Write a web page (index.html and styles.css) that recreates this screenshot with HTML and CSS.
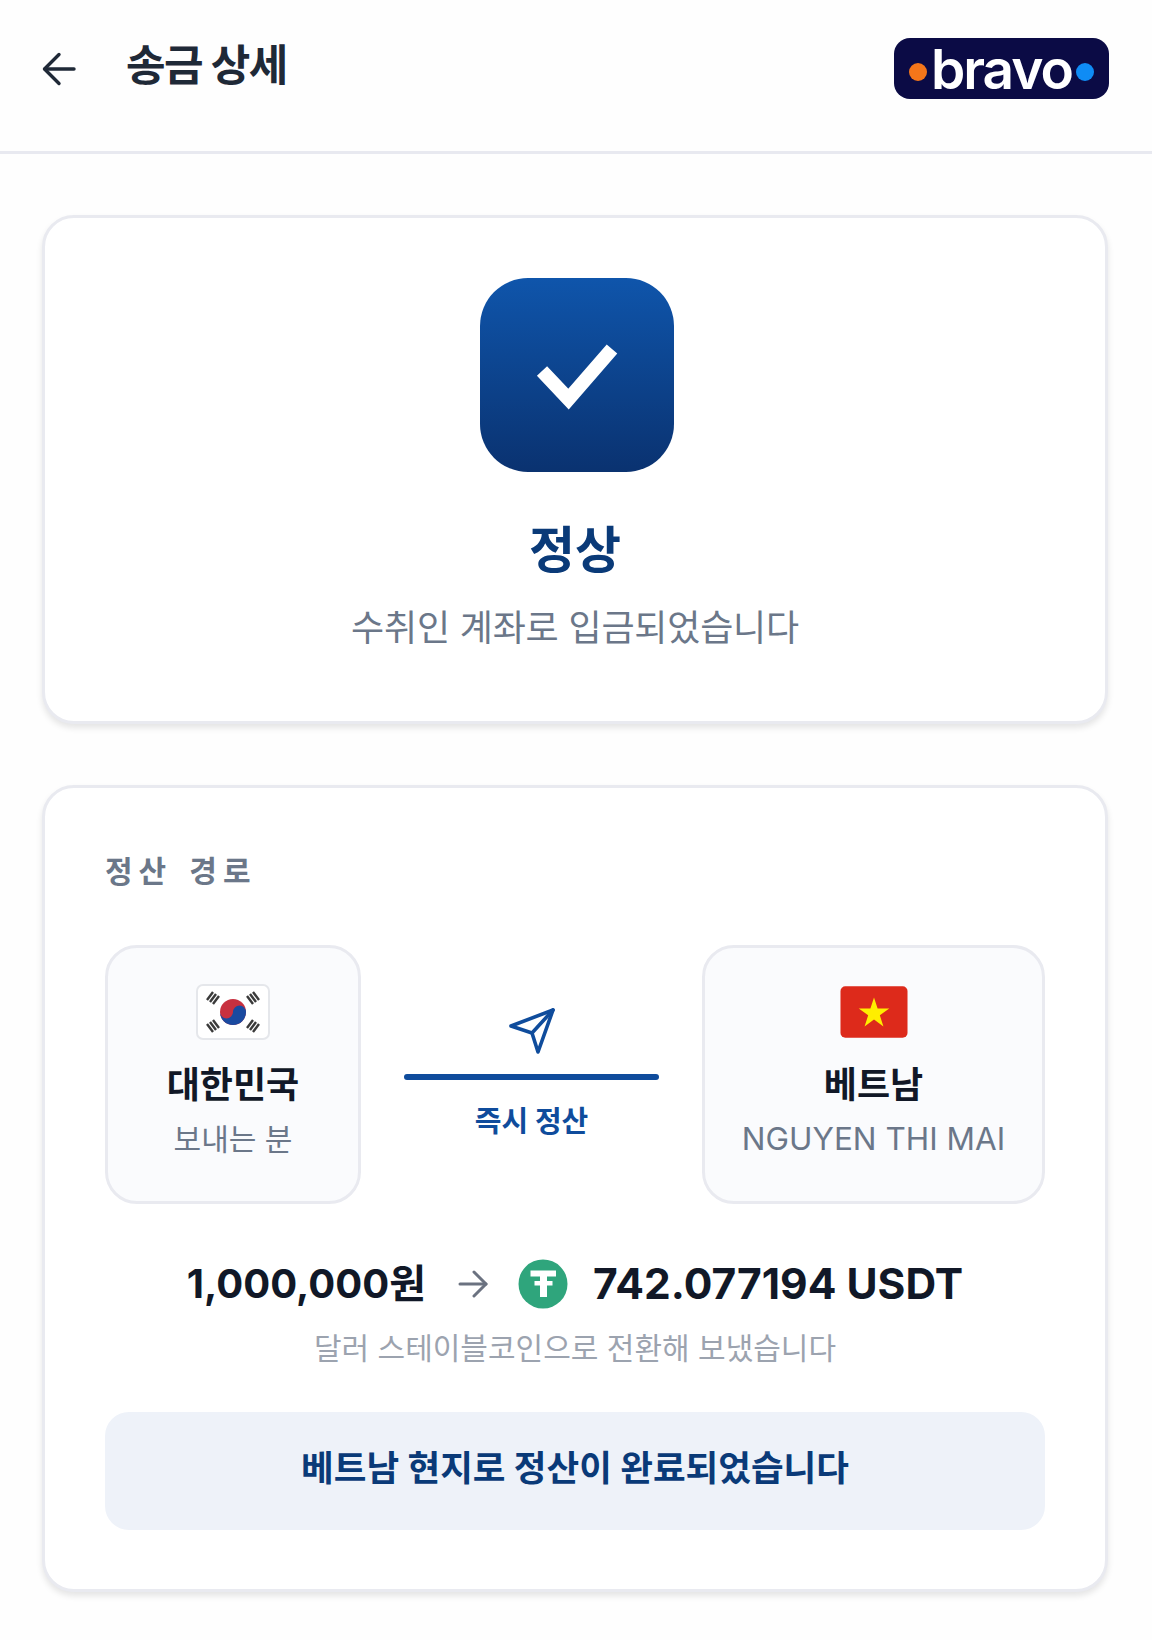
FILE: index.html
```html
<!DOCTYPE html>
<html lang="ko">
<head>
    <meta charset="UTF-8">
    <meta name="viewport" content="width=device-width, initial-scale=1.0">
    <title>송금 상세</title>
    <link rel="stylesheet" href="styles.css">
</head>
<body>
    <header class="top-bar">
        <div class="top-left">
            <svg class="back-icon" viewBox="0 0 34 34" fill="none" stroke="#1f2937" stroke-width="3.4" stroke-linecap="round" stroke-linejoin="round">
                <path d="M32 17H3"/>
                <path d="M17 2.500L2.500 17L17 31.500"/>
            </svg>
            <h1 class="page-title">송금 상세</h1>
        </div>
        <div class="logo">
            <span class="logo-dot orange"></span>
            <span class="logo-text">bravo</span>
            <span class="logo-dot blue"></span>
        </div>
    </header>

    <main class="content">
        <section class="card status-card">
            <div class="status-icon">
                <svg viewBox="0 0 194 194" fill="none" stroke="#fff" stroke-width="14">
                    <path d="M62 93L88.500 121L132 71"/>
                </svg>
            </div>
            <h2 class="status-title">정상</h2>
            <p class="status-text">수취인 계좌로 입금되었습니다</p>
        </section>

        <section class="card route-card">
            <h3 class="section-label">정산 경로</h3>
            <div class="route">
                <div class="party party-from">
                    <svg class="flag flag-kr" viewBox="0 0 74 56">
                        <rect x="1" y="1" width="72" height="54" rx="6" fill="#fff" stroke="#e5e7eb" stroke-width="2"/>
                        <circle cx="37" cy="28" r="13" fill="#c8303f"/>
                        <path d="M24 28a13 13 0 0 0 26 0a6.500 6.500 0 0 0-13 0a6.500 6.500 0 0 1-13 0z" fill="#1a4aa0"/>
                        <g stroke="#3a3a3a" stroke-width="2.400">
                            <path d="M11 16L17 8M14 18L20 10M17 20L23 12"/>
                            <path d="M51 12L57 20M54 10L60 18M57 8L63 16"/>
                            <path d="M11 40L17 48M14 38L20 46M17 36L23 44"/>
                            <path d="M51 44L57 36M54 46L60 38M57 48L63 40"/>
                        </g>
                    </svg>
                    <div class="party-name">대한민국</div>
                    <div class="party-sub">보내는 분</div>
                </div>
                <div class="route-mid">
                    <svg class="plane" viewBox="0 0 46 46" fill="none" stroke="#0f4c9c" stroke-width="3.600" stroke-linejoin="round" stroke-linecap="round">
                        <path d="M44 2L2 18L23 25L29 44Z"/>
                        <path d="M44 2L23 25"/>
                    </svg>
                    <div class="route-line"></div>
                    <div class="route-text">즉시 정산</div>
                </div>
                <div class="party party-to">
                    <svg class="flag flag-vn" viewBox="0 0 70 54">
                        <rect x="0.500" y="0.500" width="69" height="53" rx="5" fill="#dd2a1b"/>
                        <path d="M35 12L38.700 23.400H50.700L41 30.400L44.700 41.800L35 34.800L25.300 41.800L29 30.400L19.300 23.400H31.300Z" fill="#ffee00"/>
                    </svg>
                    <div class="party-name">베트남</div>
                    <div class="party-sub party-sub-latin">NGUYEN THI MAI</div>
                </div>
            </div>

            <div class="amount-row">
                <span class="amount amount-krw">1,000,000원</span>
                <svg class="amount-arrow" viewBox="0 0 30 28" fill="none" stroke="#6b7280" stroke-width="3" stroke-linecap="round" stroke-linejoin="round">
                    <path d="M2 14H28"/>
                    <path d="M16 2L28 14L16 26"/>
                </svg>
                <svg class="tether" viewBox="0 0 50 50">
                    <circle cx="25" cy="25" r="24.500" fill="#2fa57c"/>
                    <path d="M12.500 11.500H38V17.500H29V22H34.500V26.500H29V38H22V26.500H16.500V22H22V17.500H12.500Z" fill="#fff"/>
                </svg>
                <span class="amount amount-usdt">742.077194 USDT</span>
            </div>
            <p class="amount-note">달러 스테이블코인으로 전환해 보냈습니다</p>
            <div class="done-banner">베트남 현지로 정산이 완료되었습니다</div>
        </section>
    </main>
</body>
</html>
```

FILE: styles.css
```css
* {
    box-sizing: border-box;
}
html, body {
    margin: 0;
    padding: 0;
}
body {
    width: 1152px;
    min-height: 1640px;
    background-color: #fefefe;
    font-family: Inter, "Noto Sans CJK KR", sans-serif;
    color: #111827;
}
h1, h2, h3, p {
    margin: 0;
}

.top-bar {
    height: 154px;
    padding: 38px 43px 0 42px;
    display: flex;
    justify-content: space-between;
    align-items: flex-start;
    border-bottom: 3px solid #e8e9f0;
}
.top-left {
    display: flex;
    align-items: center;
    gap: 50px;
    height: 48px;
}
.back-icon {
    width: 34px;
    height: 34px;
    margin-top: 14px;
}
.page-title {
    font-size: 43px;
    font-weight: 700;
    color: #1f2937;
    letter-spacing: -1.500px;
}
.logo {
    width: 215px;
    height: 61px;
    background-color: #0b0b45;
    border-radius: 16px;
    display: flex;
    align-items: center;
    justify-content: center;
    gap: 4px;
}
.logo-dot {
    width: 18px;
    height: 18px;
    border-radius: 50%;
    margin-top: 6px;
}
.logo-dot.orange {
    background-color: #f5761a;
}
.logo-dot.blue {
    background-color: #0f8cf5;
}
.logo-text {
    margin-top: 1px;
    font-family: Inter, sans-serif;
    font-weight: 600;
    font-size: 55px;
    line-height: 58px;
    color: #fff;
    letter-spacing: -2px;
}

.content {
    padding: 61px 44px 0 42px;
    display: flex;
    flex-direction: column;
    gap: 61px;
}
.card {
    background-color: #fff;
    border: 3px solid #e9eaf0;
    border-radius: 32px;
    box-shadow: 0 4px 6px rgba(0, 0, 0, 0.1);
}

.status-card {
    height: 509px;
    padding-top: 60px;
    display: flex;
    flex-direction: column;
    align-items: center;
}
.status-icon {
    width: 194px;
    height: 194px;
    margin-left: 4px;
    border-radius: 48px;
    background: linear-gradient(180deg, #0f55ab, #0a3270);
}
.status-icon svg {
    display: block;
    width: 194px;
    height: 194px;
}
.status-title {
    margin-top: 43px;
    font-size: 50px;
    line-height: 70px;
    font-weight: 700;
    color: #0a3a78;
}
.status-text {
    margin-top: 18px;
    font-size: 36px;
    line-height: 50px;
    letter-spacing: -0.2px;
    color: #6b7789;
}

.route-card {
    height: 807px;
    padding: 61px 60px 0;
}
.section-label {
    font-size: 30px;
    line-height: 44px;
    font-weight: 700;
    color: #6b7789;
    letter-spacing: 6px;
    word-spacing: 4px;
}
.route {
    margin-top: 52px;
    display: flex;
    align-items: center;
}
.party {
    height: 259px;
    border: 3px solid #e9eaf0;
    border-radius: 32px;
    background-color: #fafbfd;
    display: flex;
    flex-direction: column;
    align-items: center;
    padding-top: 36px;
}
.party-from {
    width: 256px;
}
.party-to {
    width: 343px;
}
.flag {
    display: block;
    height: 56px;
}
.flag-kr {
    width: 74px;
}
.flag-vn {
    width: 68px;
}
.party-name {
    margin-top: 20px;
    font-size: 36px;
    line-height: 50px;
    font-weight: 700;
    color: #111827;
}
.party-sub {
    margin-top: 4px;
    font-size: 30px;
    line-height: 50px;
    color: #6b7789;
}
.party-sub-latin {
    font-size: 31.500px;
}
.route-mid {
    flex: 1;
    display: flex;
    flex-direction: column;
    align-items: center;
    padding: 0 43px;
}
.plane {
    width: 46px;
    height: 46px;
    display: block;
}
.route-line {
    margin-top: 20px;
    width: 100%;
    height: 6px;
    border-radius: 3px;
    background-color: #0f4c9c;
}
.route-text {
    margin-top: 22px;
    font-size: 29px;
    line-height: 40px;
    font-weight: 700;
    color: #0f4c9c;
}

.amount-row {
    margin-top: 52px;
    display: flex;
    justify-content: center;
    align-items: center;
    height: 56px;
}
.amount {
    line-height: 56px;
    font-weight: 700;
    color: #111827;
}
.amount-krw {
    font-size: 40px;
}
.amount-usdt {
    font-size: 42.500px;
}
.amount-arrow {
    width: 30px;
    height: 28px;
    margin: 0 30px 0 32px;
}
.tether {
    width: 50px;
    height: 50px;
    margin-right: 25px;
}
.amount-note {
    margin-top: 14px;
    text-align: center;
    font-size: 30px;
    line-height: 44px;
    color: #9ca3af;
}
.done-banner {
    margin-top: 42px;
    height: 118px;
    padding-bottom: 12px;
    border-radius: 24px;
    background-color: #eef2f9;
    display: flex;
    align-items: center;
    justify-content: center;
    font-size: 35.500px;
    font-weight: 700;
    color: #0a3a78;
}
```
